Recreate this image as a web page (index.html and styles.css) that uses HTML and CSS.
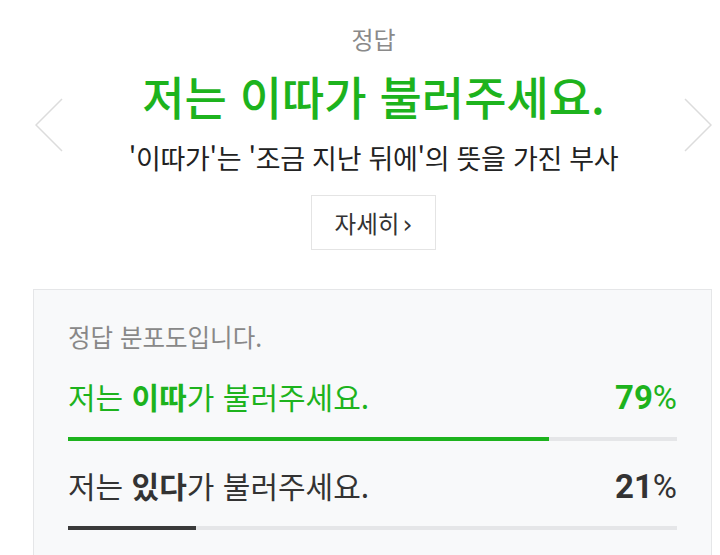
FILE: index.html
```html
<!DOCTYPE html>
<html lang="ko">
<head>
  <meta charset="UTF-8">
  <title>정답</title>
  <link rel="stylesheet" href="styles.css">
</head>
<body>

<!-- Answer header -->
<div class="answer">
  <svg class="arrow" width="28" height="54" viewBox="0 0 28 54">
    <polyline points="27,1 1,27 27,53" fill="none" stroke="#dcdcdc" stroke-width="1.5"/>
  </svg>

  <div class="answer-body">
    <div class="answer-label">정답</div>
    <h1 class="answer-title">저는 이따가 불러주세요.</h1>
    <p class="answer-desc">'이따가'는 '조금 지난 뒤에'의 뜻을 가진 부사</p>
    <button class="more-btn">자세히<span class="more-arrow">&rsaquo;</span></button>
  </div>

  <svg class="arrow" width="28" height="54" viewBox="0 0 28 54">
    <polyline points="1,1 27,27 1,53" fill="none" stroke="#dcdcdc" stroke-width="1.5"/>
  </svg>
</div>

<!-- Distribution -->
<div class="dist">
  <div class="dist-label">정답 분포도입니다.</div>

  <div class="dist-row correct">
    <div class="dist-line">
      <span class="dist-text">저는 <b>이따</b>가 불러주세요.</span>
      <span class="dist-pct"><b>79</b>%</span>
    </div>
    <div class="bar"><div class="bar-fill" style="width: 79%"></div></div>
  </div>

  <div class="dist-row">
    <div class="dist-line">
      <span class="dist-text">저는 <b>있다</b>가 불러주세요.</span>
      <span class="dist-pct"><b>21</b>%</span>
    </div>
    <div class="bar"><div class="bar-fill" style="width: 21%"></div></div>
  </div>
</div>

</body>
</html>
```

FILE: styles.css
```css
body {
  margin: 0;
  padding: 0;
  background-color: #fff;
  font-family: 'Noto Sans CJK KR', 'Noto Sans', sans-serif;
  color: #222;
  overflow: hidden;
}

.answer {
  display: flex;
  align-items: flex-start;
  padding: 23px 8px 0 35px;
}

.arrow {
  flex: none;
  margin-top: 75px;
}

.answer-body {
  flex: 1;
  text-align: center;
}

.answer-label {
  font-size: 24px;
  line-height: 32px;
  color: #8a8a8a;
}

.answer-title {
  margin: 15px 0 0;
  font-size: 46px;
  line-height: 50px;
  font-weight: 500;
  color: #1db31d;
}

.answer-desc {
  margin: 20px 0 0;
  font-size: 27px;
  line-height: 36px;
  letter-spacing: -0.3px;
  color: #222;
}

.more-btn {
  margin-top: 19px;
  width: 125px;
  height: 55px;
  padding: 0;
  background-color: #fff;
  border: 1.5px solid #e4e4e4;
  border-radius: 0;
  font-family: 'Noto Sans CJK KR', sans-serif;
  font-size: 23.5px;
  color: #333;
}

.more-arrow {
  margin-left: 3px;
  font-family: 'DejaVu Sans', sans-serif;
  font-size: 25px;
}

.dist {
  margin: 39px 8px 0 33px;
  padding: 31px 34px 40px;
  background-color: #f8f9fa;
  border: 1px solid #e5e6e8;
  border-bottom: none;
}

.dist-label {
  font-size: 24.5px;
  line-height: 32px;
  color: #888;
}

.dist-row {
  margin-top: 23px;
  color: #333;
}

.dist-row + .dist-row {
  margin-top: 24px;
}

.dist-line {
  display: flex;
  justify-content: space-between;
  align-items: baseline;
}

.dist-text {
  font-size: 30px;
  line-height: 40px;
}

.dist-text b {
  font-weight: 700;
}

.dist-pct {
  font-family: Roboto, 'Noto Sans', sans-serif;
  font-size: 33px;
  line-height: 40px;
}

.dist-pct b {
  font-weight: 700;
}

.bar {
  margin-top: 19px;
  height: 4px;
  background-color: #e5e6e8;
}

.bar-fill {
  height: 100%;
  background-color: #3a3a3a;
}

.correct {
  color: #1db31d;
}

.correct .bar-fill {
  background-color: #1db31d;
}
```
